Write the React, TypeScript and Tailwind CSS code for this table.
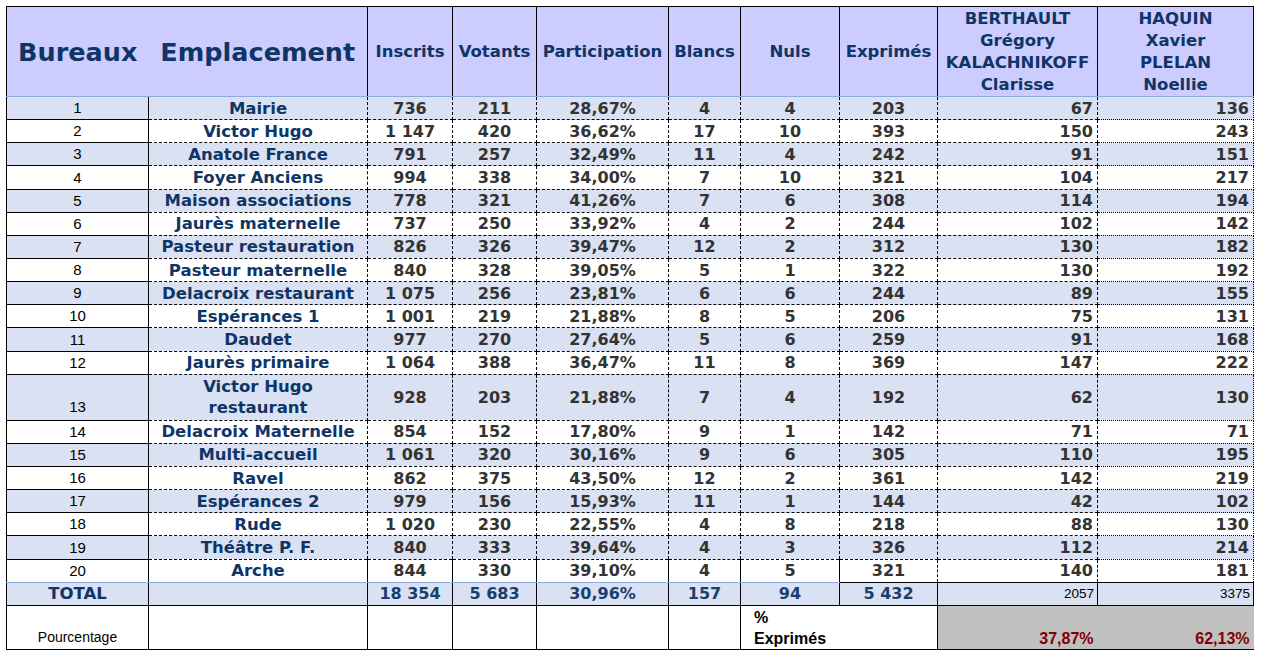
import React from 'react';

type Row = [number, React.ReactNode, string, string, string, string, string, string, string, string];

const rows: Row[] = [
  [1, 'Mairie', '736', '211', '28,67%', '4', '4', '203', '67', '136'],
  [2, 'Victor Hugo', '1 147', '420', '36,62%', '17', '10', '393', '150', '243'],
  [3, 'Anatole France', '791', '257', '32,49%', '11', '4', '242', '91', '151'],
  [4, 'Foyer Anciens', '994', '338', '34,00%', '7', '10', '321', '104', '217'],
  [5, 'Maison associations', '778', '321', '41,26%', '7', '6', '308', '114', '194'],
  [6, 'Jaurès maternelle', '737', '250', '33,92%', '4', '2', '244', '102', '142'],
  [7, 'Pasteur restauration', '826', '326', '39,47%', '12', '2', '312', '130', '182'],
  [8, 'Pasteur maternelle', '840', '328', '39,05%', '5', '1', '322', '130', '192'],
  [9, 'Delacroix restaurant', '1 075', '256', '23,81%', '6', '6', '244', '89', '155'],
  [10, 'Espérances 1', '1 001', '219', '21,88%', '8', '5', '206', '75', '131'],
  [11, 'Daudet', '977', '270', '27,64%', '5', '6', '259', '91', '168'],
  [12, 'Jaurès primaire', '1 064', '388', '36,47%', '11', '8', '369', '147', '222'],
  [13, <>Victor Hugo<br />restaurant</>, '928', '203', '21,88%', '7', '4', '192', '62', '130'],
  [14, 'Delacroix Maternelle', '854', '152', '17,80%', '9', '1', '142', '71', '71'],
  [15, 'Multi-accueil', '1 061', '320', '30,16%', '9', '6', '305', '110', '195'],
  [16, 'Ravel', '862', '375', '43,50%', '12', '2', '361', '142', '219'],
  [17, 'Espérances 2', '979', '156', '15,93%', '11', '1', '144', '42', '102'],
  [18, 'Rude', '1 020', '230', '22,55%', '4', '8', '218', '88', '130'],
  [19, 'Théâtre P. F.', '840', '333', '39,64%', '4', '3', '326', '112', '214'],
  [20, 'Arche', '844', '330', '39,10%', '4', '5', '321', '140', '181'],
];

const verdana = "font-['DejaVu_Sans',Verdana,sans-serif]";
const calibri = "font-['Liberation_Sans',Arial,sans-serif]";

const App: React.FC = () => {
  return (
    <div className="min-h-[661px] w-[1268px] bg-white pl-[6px] pt-[6px]">
      <table className={`w-[1247px] table-fixed border-collapse ${verdana}`}>
        <colgroup>
          <col className="w-[142px]" />
          <col className="w-[219px]" />
          <col className="w-[85px]" />
          <col className="w-[84px]" />
          <col className="w-[132px]" />
          <col className="w-[72px]" />
          <col className="w-[99px]" />
          <col className="w-[98px]" />
          <col className="w-[160px]" />
          <col className="w-[156px]" />
        </colgroup>
        <thead>
          {/* En-tête */}
          <tr className="h-[90px] bg-[#ccccff] text-[#0f3566]">
            <th className="border border-r-0 border-black border-b-[#8ea9db] pt-[2px] text-[25.5px] font-bold">Bureaux</th>
            <th className="border border-l-0 border-black border-b-[#8ea9db] pt-[2px] text-[25.5px] font-bold">Emplacement</th>
            <th className="border border-black border-b-[#8ea9db] pt-[2px] text-[16.5px] font-bold">Inscrits</th>
            <th className="border border-black border-b-[#8ea9db] pt-[2px] text-[16.5px] font-bold">Votants</th>
            <th className="border border-black border-b-[#8ea9db] pt-[2px] text-[16.5px] font-bold">Participation</th>
            <th className="border border-black border-b-[#8ea9db] pt-[2px] text-[16.5px] font-bold">Blancs</th>
            <th className="border border-black border-b-[#8ea9db] pt-[2px] text-[16.5px] font-bold">Nuls</th>
            <th className="border border-black border-b-[#8ea9db] pt-[2px] text-[16.5px] font-bold">Exprimés</th>
            <th className="border border-black border-b-[#8ea9db] text-[16.5px] font-bold leading-[22px]">
              BERTHAULT<br />Grégory<br />KALACHNIKOFF<br />Clarisse
            </th>
            <th className="border border-black border-b-[#8ea9db] text-[16.5px] font-bold leading-[22px]">
              HAQUIN<br />Xavier<br />PLELAN<br />Noellie
            </th>
          </tr>
        </thead>
        <tbody>
          {rows.map((r, i) => {
            const shaded = i % 2 === 0;
            const last = i === rows.length - 1;
            const tall = r[0] === 13;
            const num = `border-x border-b border-black ${last ? 'border-b-[#8ea9db]' : 'border-dashed border-x-solid'} text-center text-[16px] font-bold text-[#333333]`;
            return (
              <tr key={r[0]} className={`${tall ? 'h-[46px]' : 'h-[23.15px]'} ${shaded ? 'bg-[#d9e1f2]' : 'bg-white'} leading-[21px]`}>
                <td className={`border-x border-b border-black ${last ? 'border-b-[#8ea9db]' : ''} ${tall ? 'pb-[3px]' : 'pb-[1px]'} text-center align-bottom text-[15px] text-black ${calibri}`}>
                  {r[0]}
                </td>
                <td className={`border-x border-b border-black ${last ? 'border-b-[#8ea9db]' : 'border-dashed border-x-solid'} text-center text-[16.5px] font-bold text-[#0f3566] whitespace-nowrap`}>
                  {r[1]}
                </td>
                <td className={`${num} whitespace-nowrap`}>{r[2]}</td>
                <td className={num}>{r[3]}</td>
                <td className={num}>{r[4]}</td>
                <td className={num}>{r[5]}</td>
                <td className={num}>{r[6]}</td>
                <td className="border-x border-b border-black border-dashed border-x-solid text-center text-[16px] font-bold text-[#333333]">{r[7]}</td>
                <td className="border-x border-b border-black border-dashed border-x-solid pr-[4px] text-right text-[16px] font-bold text-[#333333]">{r[8]}</td>
                <td className="border-x border-b border-black border-dotted border-x-solid pr-[4px] text-right text-[16px] font-bold text-[#333333]">{r[9]}</td>
              </tr>
            );
          })}
          {/* TOTAL */}
          <tr className="h-[23px] bg-[#d9e1f2] text-[16px] font-bold leading-[21px] text-[#17406e]">
            <td className="border border-black border-t-[#8ea9db] text-center text-[16.5px] text-[#0f3566]">TOTAL</td>
            <td className="border border-black border-t-[#8ea9db]"></td>
            <td className="border border-black border-t-[#8ea9db] text-center">18 354</td>
            <td className="border border-black border-t-[#8ea9db] text-center">5 683</td>
            <td className="border border-black border-t-[#8ea9db] text-center">30,96%</td>
            <td className="border border-black border-t-[#8ea9db] text-center">157</td>
            <td className="border border-black border-t-[#8ea9db] text-center">94</td>
            <td className="border border-black border-t-dashed text-center">5 432</td>
            <td className={`border border-black border-t-dashed pr-[3px] text-right text-[13.5px] font-normal text-black ${calibri}`}>2057</td>
            <td className={`border border-black border-t-dotted pr-[3px] text-right text-[13.5px] font-normal text-black ${calibri}`}>3375</td>
          </tr>
          {/* Pourcentage */}
          <tr className="h-[44px] bg-white">
            <td className={`border border-black pb-[1px] text-center align-bottom text-[14px] text-black ${calibri}`}>Pourcentage</td>
            <td className="border border-black"></td>
            <td className="border border-black"></td>
            <td className="border border-black"></td>
            <td className="border border-black"></td>
            <td className="border border-black"></td>
            <td colSpan={2} className={`border border-black pl-[13px] text-left align-bottom text-[16px] font-bold leading-[21px] text-black ${calibri}`}>
              %<br />Exprimés
            </td>
            <td className={`border-y border-black bg-[#c0c0c0] pr-[4px] text-right align-bottom text-[16px] font-bold leading-[21px] text-[#800000] ${calibri}`}>37,87%</td>
            <td className={`border-y border-black bg-[#c0c0c0] pr-[4px] text-right align-bottom text-[16px] font-bold leading-[21px] text-[#800000] ${calibri}`}>62,13%</td>
          </tr>
        </tbody>
      </table>
    </div>
  );
};

export default App;
